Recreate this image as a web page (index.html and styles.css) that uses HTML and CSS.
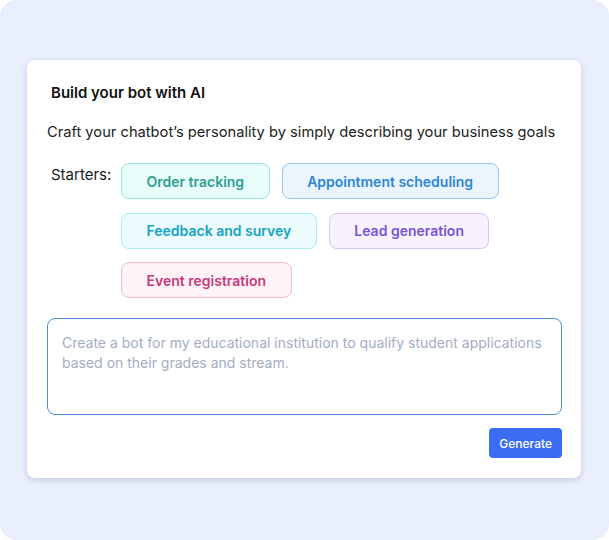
FILE: index.html
```html
<!DOCTYPE html>
<html>

<head>
    <title>Build your bot with AI</title>
    <link rel="stylesheet" href="styles.css">
</head>

<body>
    <div class="frame">
        <div class="card">
            <h2 class="title">Build your bot with AI</h2>
            <p class="subtitle">Craft your chatbot’s personality by simply describing your business goals</p>

            <!-- Starter chips -->
            <div class="starters">
                <span class="starters-label">Starters:</span>
                <div class="chips">
                    <button class="chip chip-teal">Order tracking</button>
                    <button class="chip chip-blue">Appointment scheduling</button>
                    <button class="chip chip-cyan">Feedback and survey</button>
                    <button class="chip chip-purple">Lead generation</button>
                    <button class="chip chip-pink">Event registration</button>
                </div>
            </div>

            <textarea class="prompt" placeholder="Create a bot for my educational institution to qualify student applications based on their grades and stream."></textarea>

            <div class="actions">
                <button class="generate">Generate</button>
            </div>
        </div>
    </div>
</body>

</html>
```

FILE: styles.css
```css
html,
body {
    margin: 0;
    background: #ffffff;
    font-family: Inter, "Noto Sans", sans-serif;
}

.frame {
    width: 609px;
    height: 540px;
    box-sizing: border-box;
    background: #eaeffd;
    border-radius: 16px;
    padding: 60px 28px 0 27px;
}

.card {
    background: #ffffff;
    border-radius: 8px;
    box-shadow: 0 2px 6px rgba(40, 50, 90, 0.18);
    padding: 23px 19px 20px 20px;
}

.title {
    margin: 0 0 0 4px;
    font-size: 15px;
    line-height: 20px;
    font-weight: 600;
    color: #111111;
}

.subtitle {
    margin: 18px 0 0 0;
    font-size: 14.7px;
    line-height: 22px;
    color: #222222;
    white-space: nowrap;
}

/* Starter chips */
.starters {
    display: flex;
    align-items: flex-start;
    margin-top: 20px;
    margin-left: 4px;
}

.starters-label {
    font-size: 15px;
    line-height: 22px;
    color: #1a1a1a;
    padding-top: 1px;
    width: 70px;
    flex-shrink: 0;
}

.chips {
    display: flex;
    flex-wrap: wrap;
    gap: 13.5px 12px;
    width: 400px;
}

.chip {
    height: 36px;
    padding: 0 24.5px;
    border-radius: 8px;
    border: 1px solid;
    font-family: Inter, "Noto Sans", sans-serif;
    font-size: 14px;
    font-weight: 600;
    cursor: pointer;
}

.chip-teal {
    background: #e8fdf9;
    border-color: #93e6dc;
    color: #2f9e94;
}

.chip-blue {
    background: #eaf5fe;
    border-color: #92c7ef;
    color: #2f86d8;
}

.chip-cyan {
    background: #ebfbfe;
    border-color: #a6ebf6;
    color: #14a3c2;
}

.chip-purple {
    background: #f7f2fe;
    border-color: #d9c3f7;
    color: #7954d6;
}

.chip-pink {
    background: #fef3f6;
    border-color: #f5b7cd;
    color: #c63a7d;
}

.prompt {
    display: block;
    box-sizing: border-box;
    width: 100%;
    height: 97px;
    margin-top: 20px;
    padding: 14px 14px;
    border: 1px solid #4a90d9;
    border-radius: 8px;
    resize: none;
    font-family: Inter, "Noto Sans", sans-serif;
    font-size: 14px;
    line-height: 20px;
    color: #333333;
    outline: none;
}

.prompt::placeholder {
    color: #a3adc2;
}

.actions {
    display: flex;
    justify-content: flex-end;
    margin-top: 13px;
}

.generate {
    height: 30px;
    padding: 0 10px;
    border: none;
    border-radius: 4px;
    background: #3a6cf4;
    color: #ffffff;
    font-family: Inter, "Noto Sans", sans-serif;
    font-size: 12px;
    font-weight: 500;
    cursor: pointer;
}
```
